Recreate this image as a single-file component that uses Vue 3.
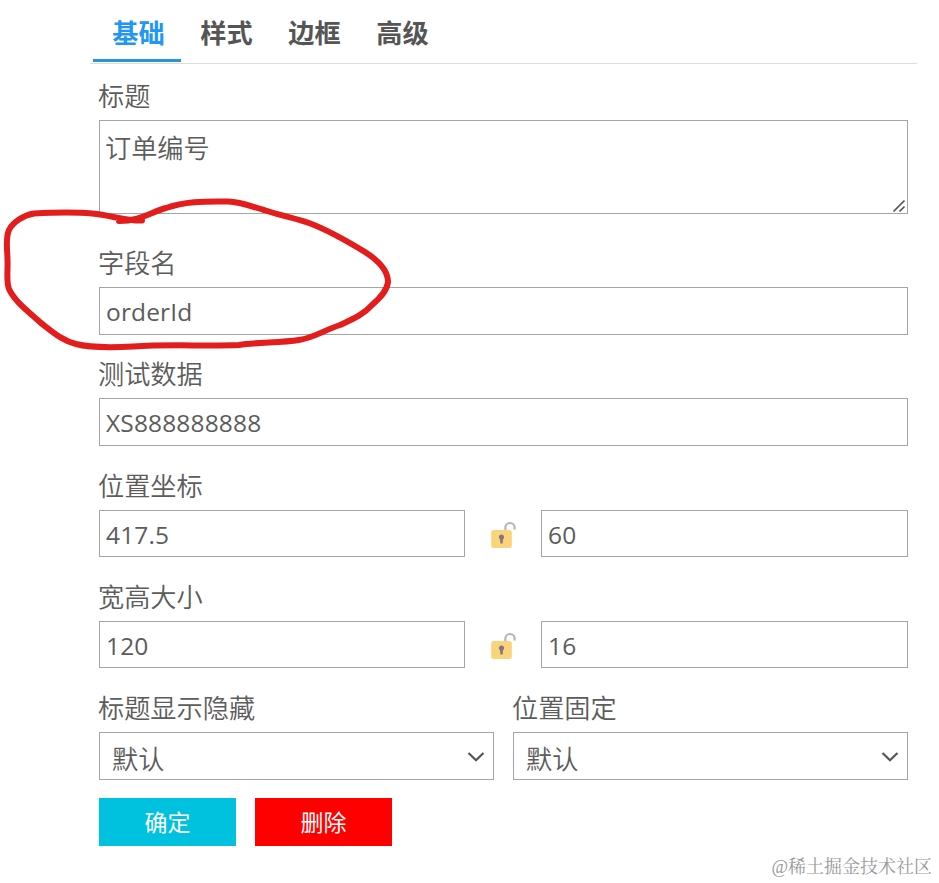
<script setup>
import { ref } from 'vue'

const tabs = ['基础', '样式', '边框', '高级']
const active = ref(0)
const title = ref('订单编号')
const field = ref('orderId')
const testData = ref('XS888888888')
const pairs = ref([
  { label: '位置坐标', a: '417.5', b: '60' },
  { label: '宽高大小', a: '120', b: '16' },
])
const selects = ['标题显示隐藏', '位置固定']
</script>

<template>
  <main class="panel">
    <nav class="tabs">
      <a v-for="(t, i) in tabs" :key="t" class="tab" :class="{ active: i === active }" @click="active = i">{{ t }}</a>
    </nav>
    <div class="form">
      <section class="item first">
        <label class="label">标题</label>
        <div class="area">
          <textarea v-model="title" class="control" spellcheck="false"></textarea>
          <svg class="grip" width="14" height="14" viewBox="0 0 14 14"><path d="M1.5 12.5 12.5 1.5M7.5 12.5 12.5 7.5" /></svg>
        </div>
      </section>
      <section class="item field">
        <label class="label">字段名</label>
        <input v-model="field" class="control" spellcheck="false" />
      </section>
      <section class="item test">
        <label class="label">测试数据</label>
        <input v-model="testData" class="control" spellcheck="false" />
      </section>
      <section v-for="p in pairs" :key="p.label" class="item">
        <label class="label">{{ p.label }}</label>
        <div class="pair">
          <input v-model="p.a" class="control" />
          <svg class="lock" width="26" height="28" viewBox="0 0 26 28">
            <path class="shackle" d="M15.4 9V6.6a4.6 4.6 0 0 1 9.2 0V8.5" />
            <rect x="1.2" y="9" width="20.6" height="18" rx="2.5" fill="#fad47b" />
            <path fill="#857580" d="M11.5 13.4a2.7 2.7 0 0 0-1.5 4.9l.4 4.2h2.2l.4-4.2a2.7 2.7 0 0 0-1.5-4.9z" />
          </svg>
          <input v-model="p.b" class="control" />
        </div>
      </section>
      <div class="selects">
        <section v-for="s in selects" :key="s" class="item">
          <label class="label">{{ s }}</label>
          <div class="control select">
            <span>默认</span>
            <svg width="18" height="12" viewBox="0 0 18 12"><path d="M1.5 2 9 9.2 16.5 2" /></svg>
          </div>
        </section>
      </div>
      <div class="actions">
        <button class="ok">确定</button>
        <button class="del">删除</button>
      </div>
    </div>
    <svg class="marker" width="400" height="360" viewBox="0 0 400 360">
      <path d="M142 220.500C126 221 112 215.500 92 213.500C74 212 54 212.500 34 213.500C24 215 13 222 9 230C5 239 7.500 249 7.500 260C8 272 6 281 9 289C15 302 29 312 41 323C54 333 63 341 76 344C91 348 114 347.500 133 346.500C170 344 207 346.500 239 345C257 342 280 343 299 340C313 338 325 330 340 325C353 319 363 315 372 305C380 298 387 291 388 282C388 269 376 259 365 252C347 241 325 229 309 223C291 217 278 215 264 210C250 206 241 202 228 201.500C202 201 184 202 166 208C151 212 140 221 119 221" />
    </svg>
    <div class="watermark">@稀土掘金技术社区</div>
  </main>
</template>

<style>
body {
  margin: 0;
  background: #fff;
}
</style>

<style scoped>
.panel {
  position: relative;
  box-sizing: border-box;
  width: 939px;
  height: 883px;
  padding: 0 22px 0 90px;
  overflow: hidden;
  color: #555;
  font-family: "Open Sans", "Noto Sans CJK SC", sans-serif;
  font-weight: 350;
  font-size: 26.2px;
}
.tabs {
  display: flex;
  box-sizing: border-box;
  height: 64px;
  padding-left: 3px;
  border-bottom: 1px solid #ddd;
}
.tab {
  box-sizing: border-box;
  width: 88px;
  height: 62px;
  padding-left: 3px;
  line-height: 64px;
  text-align: center;
  font-family: "Noto Sans CJK SC", sans-serif;
  font-weight: 700;
  cursor: pointer;
}
.tab.active {
  color: #2196f3;
  border-bottom: 3px solid #2494df;
}
.form {
  padding: 8px 9px 0;
}
.item {
  margin-top: 16px;
}
.item.first {
  margin-top: 0;
}
.field {
  margin-top: 25px;
}
.test {
  margin-top: 15px;
}
.label {
  display: block;
  height: 48px;
  margin-left: -1px;
  line-height: 46px;
  color: #5c5c5c;
  font-family: "Noto Sans CJK SC", sans-serif;
}
.control {
  display: block;
  box-sizing: border-box;
  width: 100%;
  height: 48px;
  margin: 0;
  padding: 1px 6px 0;
  border: 1px solid #a5a5a5;
  border-radius: 0;
  outline: 0;
  background: #fff;
  color: #5c5c5c;
  font: 400 24.5px "Open Sans", "Noto Sans CJK SC", sans-serif;
  letter-spacing: 0.15px;
}
.area {
  position: relative;
  height: 94px;
}
.area .control {
  height: 94px;
  padding: 6px 5px;
  resize: none;
  overflow: hidden;
  font: 350 26.2px/40px "Noto Sans CJK SC", sans-serif;
  letter-spacing: 0;
}
.grip {
  position: absolute;
  right: 2px;
  bottom: 1px;
  fill: none;
  stroke: #555;
  stroke-width: 1.7;
}
.pair {
  display: grid;
  grid-template-columns: 366px 76px 367px;
  align-items: center;
}
.pair .control {
  height: 47px;
}
.lock {
  margin-left: 25px;
  margin-top: 2px;
}
.shackle {
  fill: none;
  stroke: #b5b5b5;
  stroke-width: 2.2;
}
.selects {
  display: grid;
  grid-template-columns: 395px 395px;
  gap: 19px;
}
.select {
  display: flex;
  align-items: center;
  justify-content: space-between;
  padding: 4px 8px 0 12px;
  font: 350 26.2px/40px "Noto Sans CJK SC", sans-serif;
  letter-spacing: 0;
}
.select svg {
  margin-top: -2px;
  fill: none;
  stroke: #555;
  stroke-width: 2.2;
}
.actions {
  display: flex;
  gap: 19px;
  margin-top: 18px;
}
.actions button {
  width: 137px;
  height: 48px;
  padding: 0 0 2px;
  border: 0;
  color: #fff;
  font: 400 23px "Noto Sans CJK SC", sans-serif;
}
.ok {
  background: #00c1de;
}
.del {
  background: #f00;
}
.marker {
  position: absolute;
  left: 0;
  top: 0;
  pointer-events: none;
  fill: none;
  stroke: #e31c1c;
  stroke-width: 6;
  stroke-linecap: round;
  stroke-linejoin: round;
}
.watermark {
  position: absolute;
  right: 7px;
  bottom: 3px;
  color: #999;
  font: 400 18px/26px "Liberation Serif", "Noto Serif CJK SC", "Noto Sans CJK SC", serif;
}
</style>
